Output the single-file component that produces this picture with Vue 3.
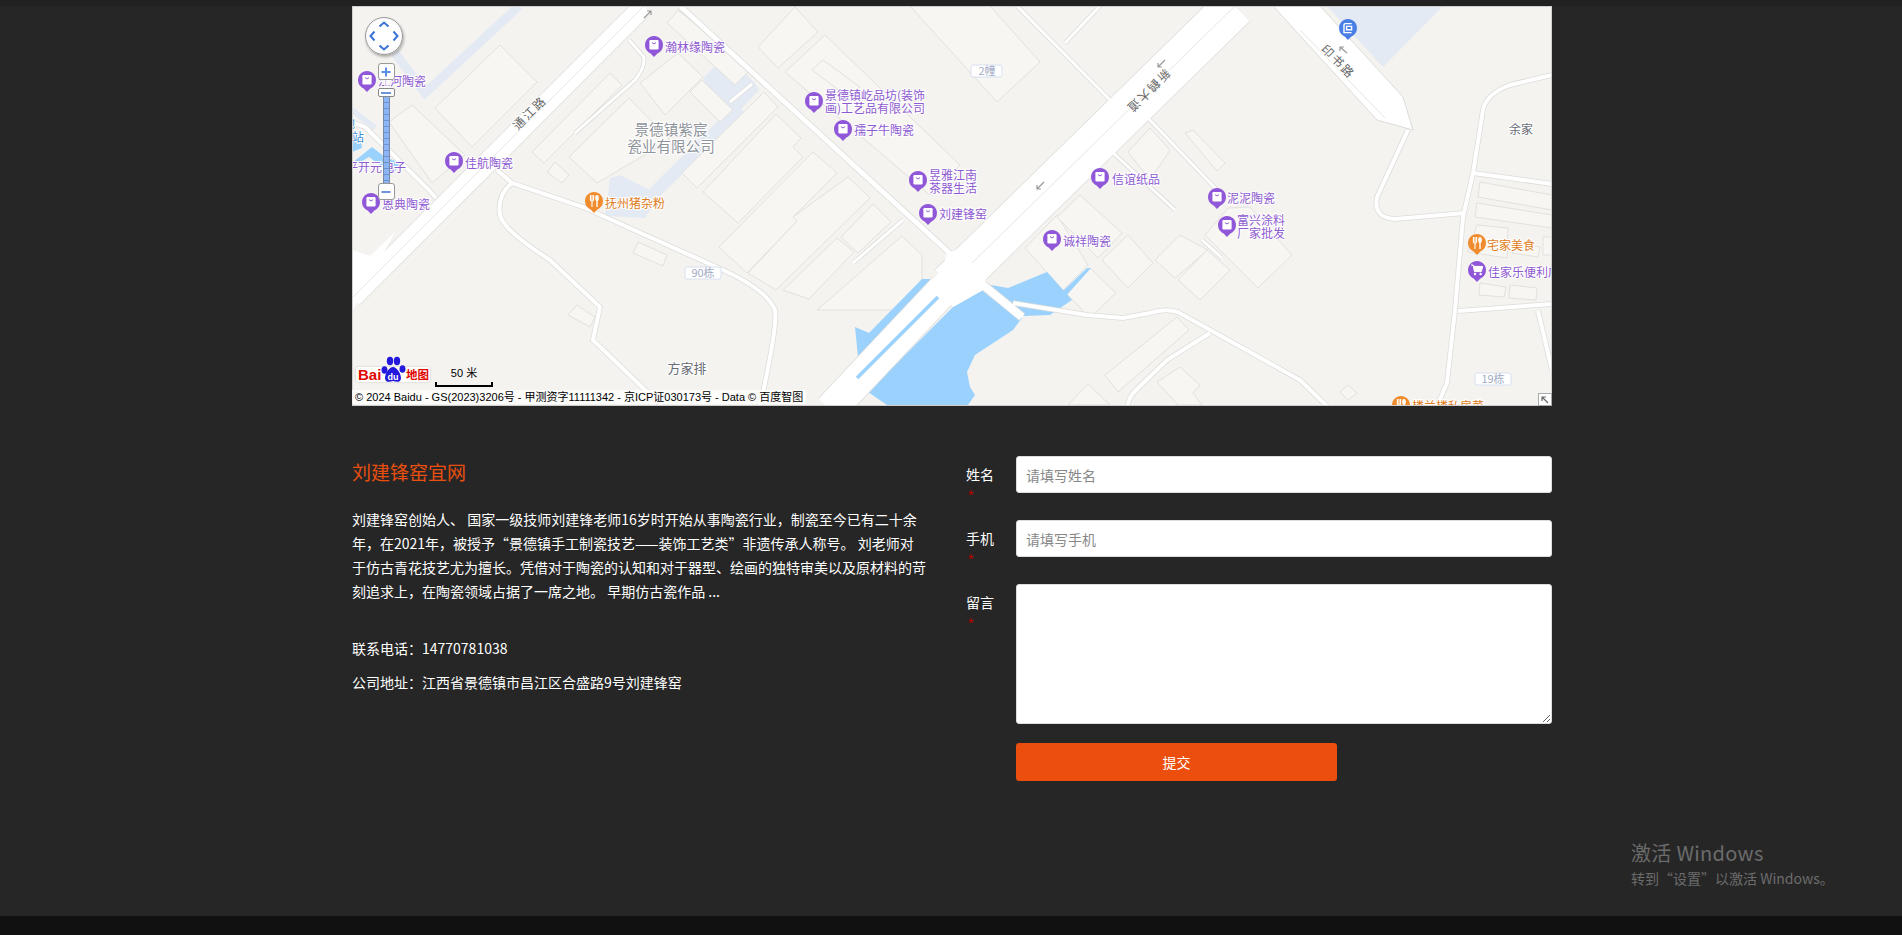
<template>
  <div class="page">
    <div class="topline"></div>
    <div class="map">
      <svg class="map-svg" viewBox="352 6 1200 400" width="1200" height="400">
        <rect x="352" y="6" width="1200" height="400" fill="#f4f3f0" />

        <!-- 淺藍色綠帶 -->
        <polygon points="1327,6 1443,6 1383,67" fill="#e4eaf3" />
        <polygon points="703,78 722,59 730,59 755,83 759,90 740,110 720,122" fill="#e4eaf3" />
        <polygon points="610,178 620,175 660,195 645,218 605,216" fill="#e4eaf3" />
        <path d="M519 6 L425 93 L395 53" stroke="#e4eaf3" stroke-width="9" fill="none" />
        <path d="M352 110 L375 128" stroke="#e4eaf3" stroke-width="6" fill="none" />
        <path d="M740 108 L640 207" stroke="#e4eaf3" stroke-width="13" fill="none" />

        <!-- 建築 -->
        <polygon v-for="(b, i) in blocks" :key="'b' + i" :points="b" class="block" />

        <!-- 水面 -->
        <polygon v-for="(w, i) in waters" :key="'w' + i" :points="w" fill="#9ad2fd" />

        <!-- 道路 -->
        <path v-for="(r, i) in roads" :key="'c' + i" :d="r.d" :stroke-width="r.w + 1.5" class="casing" />
        <polygon points="1273,6 1377,120 1413,130 1403,97 1320,6" fill="#fff" stroke="#dcdcda" />
        <polygon points="933,280 943,267 947,253 962,248 987,270 985,283 983,290 953,307" fill="#fff" />
        <polygon points="352,250 370,256 395,232 352,312" fill="#fff" />
        <path v-for="(r, i) in roads" :key="'r' + i" :d="r.d" :stroke-width="r.w" class="road" />
        <path d="M857 378 L938 297" stroke="#9ad2fd" stroke-width="3.5" fill="none" />
        <g class="median">
          <path d="M352 298 L644 6" />
          <path d="M972 263 L1235 6" />
          <path d="M1300 30 L1385 118" />
        </g>

        <!-- 路向箭頭 -->
        <g class="arrow">
          <path d="M644 18 L651 11 M647 11 H651 V15" />
          <path d="M1165 60 L1158 67 M1158 63 V67 H1162" />
          <path d="M1044 182 L1037 189 M1037 185 V189 H1041" />
          <path d="M1347 53 L1340 47 M1344 47 H1340 V51" />
        </g>

        <!-- 路名與地名 -->
        <text x="530" y="117" class="road-name" transform="rotate(-45 530 113)">通江路</text>
        <text x="1148" y="95" class="road-name" transform="rotate(135 1148 91)">新鹤大道</text>
        <text x="1338" y="66" class="road-name" transform="rotate(45 1338 62)">印书路</text>

        <text x="671" y="135" class="area">景德镇紫宸</text>
        <text x="671" y="152" class="area">瓷业有限公司</text>
        <text x="687" y="373" class="place">方家排</text>
        <text x="1521" y="134" class="place small">余家</text>
        <text x="343" y="128" class="metro">地</text>
        <text x="352" y="142" class="metro">站</text>

        <g v-for="t in tags" :key="t.text">
          <rect :x="t.x" :y="t.y" width="36" height="12" rx="2" class="tag-box" :class="{ narrow: t.narrow }" />
          <text :x="t.x + (t.narrow ? 16 : 18)" :y="t.y + 10" class="tag-text">{{ t.text }}</text>
        </g>

        <!-- 興趣點 -->
        <g v-for="p in pins" :key="p.id">
          <g :transform="`translate(${p.x} ${p.y})`">
            <path d="M0 12 L-3.4 8.4 A9 9 0 1 1 3.4 8.4 Z" :fill="colors[p.kind]" />
            <template v-if="p.kind === 'shop'">
              <rect x="-4.6" y="-5" width="9.2" height="9.4" rx="1.2" fill="#fff" />
              <path d="M-2 -2.4 Q0 0.4 2 -2.4" stroke="#8f5bd6" stroke-width="1" fill="none" />
            </template>
            <template v-else-if="p.kind === 'cart'">
              <path d="M-6 -5 H-3.8 L-2.6 1.6 H4.4 L5.6 -3.6 H-3.2" fill="#fff" stroke="#fff" stroke-width="1" />
              <circle cx="-2" cy="4" r="1.2" fill="#fff" />
              <circle cx="3.6" cy="4" r="1.2" fill="#fff" />
            </template>
            <template v-else-if="p.kind === 'food'">
              <path d="M-3.6 -6 V-1.6 Q-3.6 0 -2 0 V6 M-2 -6 V-1 M-0.4 -6 V-1.6 Q-0.4 0 -2 0" stroke="#fff" stroke-width="1.1" fill="none" />
              <path d="M3 6 V-1" stroke="#fff" stroke-width="1.4" />
              <ellipse cx="3" cy="-3" rx="1.8" ry="3" fill="#fff" />
            </template>
            <template v-else>
              <path d="M3.6 -4.4 H-2.6 Q-4 -4.4 -4 -3 V4.6 H3.6 M-1.4 -1.6 H3.6 V1.8 H-1.4 Z" stroke="#fff" stroke-width="1.4" fill="none" />
            </template>
          </g>
          <text
            v-for="(line, i) in p.lines"
            :key="line"
            :x="p.tx"
            :y="p.ty + i * 13"
            class="poi"
            :class="p.kind === 'food' ? 'food' : ''"
          >{{ line }}</text>
        </g>
        <text x="346" y="172" class="poi">平开元电子</text>
      </svg>

      <!-- 地圖控件 -->
      <div class="pan">
        <svg width="38" height="38" viewBox="0 0 38 38">
          <path d="M14.5 9.5 L19 5.5 L23.5 9.5 M14.5 28.5 L19 32.5 L23.5 28.5 M9.5 14.5 L5.5 19 L9.5 23.5 M28.5 14.5 L32.5 19 L28.5 23.5" stroke="#3b74d6" stroke-width="2" fill="none" />
        </svg>
      </div>
      <div class="zoom-bar">
        <div class="zoom-btn">
          <svg width="10" height="10" viewBox="0 0 10 10"><path d="M5 0.5 V9.5 M0.5 5 H9.5" stroke="#5a8fe8" stroke-width="2" /></svg>
        </div>
        <div class="zoom-gap"></div>
        <div class="zoom-handle"><span></span></div>
        <div class="zoom-track"></div>
        <div class="zoom-btn">
          <svg width="10" height="10" viewBox="0 0 10 10"><path d="M0.5 5 H9.5" stroke="#6d93d8" stroke-width="2" /></svg>
        </div>
      </div>

      <div class="logo">
        <span class="logo-bai">Bai</span>
        <svg class="logo-paw" width="28" height="29" viewBox="0 0 28 29">
          <ellipse cx="5.5" cy="15" rx="3" ry="3.8" fill="#2319dc" />
          <ellipse cx="11" cy="6" rx="3.2" ry="4.2" fill="#2319dc" />
          <ellipse cx="18" cy="6" rx="3.2" ry="4.2" fill="#2319dc" />
          <ellipse cx="23.5" cy="14" rx="3" ry="3.8" fill="#2319dc" />
          <path d="M14 12 C18 12 22 19 22 23 C22 28 17 27 14 26 C11 27 6 28 6 23 C6 19 10 12 14 12 Z" fill="#2319dc" />
          <text x="14" y="24.5" class="logo-du">du</text>
        </svg>
        <span class="logo-map">地图</span>
      </div>
      <div class="scale">
        <span>50 米</span>
        <i></i>
      </div>
      <div class="copy">© 2024 Baidu - GS(2023)3206号 - 甲测资字11111342 - 京ICP证030173号 - Data © 百度智图</div>
      <div class="corner">
        <svg width="10" height="10" viewBox="0 0 10 10"><path d="M8 8 L2.5 2.5 M2 6 V2 H6" stroke="#666" stroke-width="1.2" fill="none" /></svg>
      </div>
    </div>

    <div class="info">
      <div class="about">
        <h2>刘建锋窑宜网</h2>
        <p class="desc">
          刘建锋窑创始人、 国家一级技师刘建锋老师16岁时开始从事陶瓷行业，制瓷至今已有二十余<br />
          年，在2021年，被授予“景德镇手工制瓷技艺——装饰工艺类”非遗传承人称号。 刘老师对<br />
          于仿古青花技艺尤为擅长。凭借对于陶瓷的认知和对于器型、绘画的独特审美以及原材料的苛<br />
          刻追求上，在陶瓷领域占据了一席之地。 早期仿古瓷作品 ...
        </p>
        <p class="contact">联系电话：14770781038</p>
        <p class="contact">公司地址：江西省景德镇市昌江区合盛路9号刘建锋窑</p>
      </div>

      <form class="form" @submit.prevent>
        <div v-for="f in fields" :key="f.label" class="row">
          <label>{{ f.label }}<em>*</em></label>
          <textarea v-if="f.area"></textarea>
          <input v-else type="text" :placeholder="f.placeholder" />
        </div>
        <button type="submit">提交</button>
      </form>
    </div>

    <div class="footer"></div>

    <div class="activate">
      <div class="a1">激活 Windows</div>
      <div class="a2">转到“设置”以激活 Windows。</div>
    </div>
  </div>
</template>

<script setup>
const colors = { shop: '#9058d8', cart: '#9058d8', food: '#f08c2e', bus: '#4a7fe6' }

const fields = [
  { label: '姓名', placeholder: '请填写姓名' },
  { label: '手机', placeholder: '请填写手机' },
  { label: '留言', area: true }
]

const pins = [
  { id: 1, kind: 'shop', x: 654, y: 45, tx: 665, ty: 52, lines: ['瀚林缘陶瓷'] },
  { id: 2, kind: 'shop', x: 367, y: 80, tx: 378, ty: 86, lines: ['江河陶瓷'] },
  { id: 3, kind: 'shop', x: 454, y: 161, tx: 465, ty: 168, lines: ['佳航陶瓷'] },
  { id: 4, kind: 'shop', x: 371, y: 202, tx: 382, ty: 209, lines: ['恩典陶瓷'] },
  { id: 5, kind: 'food', x: 594, y: 201, tx: 605, ty: 208, lines: ['抚州猪杂粉'] },
  { id: 6, kind: 'shop', x: 814, y: 101, tx: 825, ty: 100, lines: ['景德镇屹品坊(装饰', '画)工艺品有限公司'] },
  { id: 7, kind: 'shop', x: 843, y: 129, tx: 854, ty: 135, lines: ['孺子牛陶瓷'] },
  { id: 8, kind: 'shop', x: 918, y: 180, tx: 929, ty: 180, lines: ['昱雅江南', '茶器生活'] },
  { id: 9, kind: 'shop', x: 928, y: 213, tx: 939, ty: 219, lines: ['刘建锋窑'] },
  { id: 10, kind: 'shop', x: 1100, y: 177, tx: 1112, ty: 184, lines: ['信谊纸品'] },
  { id: 11, kind: 'shop', x: 1052, y: 239, tx: 1063, ty: 246, lines: ['诚祥陶瓷'] },
  { id: 12, kind: 'shop', x: 1217, y: 197, tx: 1227, ty: 203, lines: ['泥泥陶瓷'] },
  { id: 13, kind: 'shop', x: 1227, y: 225, tx: 1237, ty: 225, lines: ['富兴涂料', '厂家批发'] },
  { id: 14, kind: 'food', x: 1477, y: 243, tx: 1487, ty: 250, lines: ['宅家美食'] },
  { id: 15, kind: 'cart', x: 1477, y: 270, tx: 1488, ty: 277, lines: ['佳家乐便利店'] },
  { id: 16, kind: 'food', x: 1401, y: 405, tx: 1412, ty: 411, lines: ['楼兰楼私房菜'] },
  { id: 17, kind: 'bus', x: 1348, y: 28, tx: 1360, ty: -20, lines: [] }
]

const tags = [
  { text: '2幢', x: 971, y: 65, narrow: true },
  { text: '90栋', x: 685, y: 267 },
  { text: '19栋', x: 1475, y: 373 }
]

const waters = [
  '953,307 983,290 1022,318 1013,330 975,355 967,372 970,387 975,395 968,405 887,405 868,392',
  '985,284 1008,288 1047,272 1072,300 1050,315 1023,316',
  '922,279 932,279 858,357 855,327 869,333',
  '1062,292 1087,268 1091,268 1066,296',
  '352,132 360,132 362,148 352,152',
  '352,163 372,147 385,157 400,163 394,173 387,170 369,157 352,167'
]

const roads = [
  { d: 'M352 298 L644 6', w: 20 },
  { d: 'M680 6 L955 258', w: 5 },
  { d: 'M830 410 L945 288', w: 32 },
  { d: 'M950 285 L1235 6', w: 42 },
  { d: 'M983 285 L1022 317', w: 8 },
  { d: 'M1408 130 L1377 197 Q1373 218 1395 219 L1465 213', w: 4 },
  { d: 'M1552 75 L1510 85 Q1486 94 1483 110 L1473 173 L1463 217 L1455 310 L1447 383 L1437 406', w: 4 },
  { d: 'M1473 173 L1552 184', w: 4 },
  { d: 'M1458 311 L1552 304', w: 4 },
  { d: 'M1538 311 L1552 370', w: 4 },
  { d: 'M1013 303 L1087 315 L1123 318 L1150 313 Q1165 308 1178 312 L1300 380 L1327 406', w: 4 },
  { d: 'M1210 333 L1167 360 L1136 390 Q1128 398 1128 406', w: 4 },
  { d: 'M1017 6 L1110 100', w: 3 },
  { d: 'M1100 6 L1065 43', w: 3 },
  { d: 'M1147 117 L1217 190', w: 3 },
  { d: 'M1110 150 L1175 210', w: 3 },
  { d: 'M497 170 L512 183 L583 207 L723 270 Q767 290 775 310 Q778 325 760 406', w: 4 },
  { d: 'M512 183 Q497 195 500 215 Q503 230 550 260 L600 307 L593 340 L643 388 L662 406', w: 4 },
  { d: 'M352 122 L365 127 L429 190 L436 198', w: 4 },
  { d: 'M629 40 L644 57 Q645 68 635 80 L575 133', w: 3 },
  { d: 'M730 102 L752 84', w: 3 },
  { d: 'M853 263 L903 220', w: 3 },
  { d: 'M1202 240 L1222 258', w: 3 }
]

const blocks = [
  '435,108 500,45 537,82 472,147',
  '389,122 412,105 465,155 432,183',
  '532,152 610,73 622,85 544,163',
  '569,157 629,98 670,140 597,183',
  '547,172 555,162 569,175 562,183',
  '640,83 678,53 703,77 665,115',
  '690,92 702,80 733,110 720,122',
  '667,23 678,10 750,70 735,85',
  '682,173 697,188 778,107 764,92',
  '703,192 738,223 803,157 793,147 801,138 776,114',
  '719,247 747,273 797,221 793,217 837,173 813,152',
  '748,273 776,290 870,198 848,177 793,217 797,221',
  '783,290 809,299 854,252 837,238',
  '841,237 873,204 891,222 858,253',
  '817,310 902,236 922,255 922,280 893,310',
  '758,47 795,7 818,32 778,68',
  '785,72 825,35 960,165 930,195',
  '812,70 823,60 860,87 848,97',
  '910,6 990,6 1040,62 997,102',
  '1025,248 1057,215 1088,265 1063,290',
  '1065,292 1090,268 1116,293 1090,318',
  '1102,260 1128,235 1153,263 1128,288',
  '1155,260 1180,235 1208,250 1175,278',
  '1178,280 1207,250 1230,270 1200,300',
  '1185,133 1193,130 1225,163 1217,171',
  '1228,208 1250,207 1292,255 1258,288 1205,235',
  '1057,217 1080,195 1122,233 1098,258',
  '1128,152 1150,128 1170,150 1150,180',
  '1105,375 1177,317 1189,330 1118,392',
  '1068,405 1088,384 1110,405',
  '1157,382 1180,367 1200,385 1193,393 1202,405 1178,405',
  '1340,392 1348,385 1357,393 1348,400',
  '1480,182 1552,195 1552,210 1478,197',
  '1477,203 1552,215 1552,228 1475,217',
  '1477,225 1508,228 1507,258 1468,252',
  '1513,243 1540,247 1538,257 1512,253',
  '1543,237 1552,237 1552,255 1543,255',
  '1480,283 1506,287 1504,297 1479,295',
  '1510,285 1537,288 1536,300 1509,298',
  '633,253 638,242 667,255 663,266',
  '568,315 577,305 595,317 590,327'
]
</script>

<style scoped>
.page {
  position: relative;
  min-height: 935px;
  padding: 0 0 0 2px;
  box-sizing: border-box;
  background: #262626;
  font-family: "Noto Sans CJK SC", "Liberation Sans", sans-serif;
  color: #eee;
  overflow: hidden;
}
.topline {
  height: 6px;
  margin-left: -2px;
  background: #212121;
}

.map {
  position: relative;
  width: 1200px;
  height: 400px;
  margin: 0 auto;
  overflow: hidden;
  outline: 1px solid #cfcfcf;
  outline-offset: -1px;
}
.map-svg {
  display: block;
}

.block {
  fill: #f7f6f3;
  stroke: #e2e1de;
  stroke-width: 1;
}
.casing {
  fill: none;
  stroke: #dcdcda;
}
.road {
  fill: none;
  stroke: #fff;
}
.median path {
  fill: none;
  stroke: #e6e6e4;
  stroke-width: 1;
}
.arrow path {
  fill: none;
  stroke: #999;
  stroke-width: 1.2;
}

.road-name,
.poi,
.area,
.place,
.metro,
.tag-text {
  font-family: "Noto Sans CJK SC", sans-serif;
}
.road-name {
  font-size: 12px;
  letter-spacing: 2px;
  text-anchor: middle;
  fill: #666;
  stroke: #fff;
  stroke-width: 2px;
  paint-order: stroke;
}
.poi {
  font-size: 12px;
  fill: #8e5ad0;
  stroke: #fff;
  stroke-width: 2px;
  paint-order: stroke;
}
.poi.food {
  fill: #e07c20;
}
.metro {
  font-size: 12px;
  fill: #3e8ed8;
  stroke: #fff;
  stroke-width: 2px;
  paint-order: stroke;
}
.area {
  font-size: 14.6px;
  text-anchor: middle;
  fill: #8f949c;
  stroke: #fff;
  stroke-width: 2px;
  paint-order: stroke;
}
.place {
  font-size: 13px;
  text-anchor: middle;
  fill: #666a73;
  stroke: #fff;
  stroke-width: 2px;
  paint-order: stroke;
}
.place.small {
  font-size: 12px;
}
.tag-box {
  fill: #fff;
  stroke: #d8e0f0;
  stroke-width: 1;
}
.tag-box.narrow {
  width: 31px;
}
.tag-text {
  font-size: 11px;
  text-anchor: middle;
  fill: #a3abc4;
}

.pan {
  position: absolute;
  left: 13px;
  top: 11px;
  width: 38px;
  height: 38px;
  border: 1px solid #999;
  border-radius: 50%;
  box-sizing: border-box;
  background: radial-gradient(circle, #fff 55%, #f0f0f0 100%);
  box-shadow: 1px 2px 3px rgba(0, 0, 0, 0.3);
}
.pan svg {
  display: block;
  margin: -1px;
}
.zoom-bar {
  position: absolute;
  left: 25px;
  top: 57px;
  width: 18px;
  display: flex;
  flex-direction: column;
  align-items: center;
}
.zoom-btn {
  width: 17px;
  height: 17px;
  box-sizing: border-box;
  border: 1px solid #999;
  border-radius: 3px;
  background: #fff;
  display: flex;
  align-items: center;
  justify-content: center;
}
.zoom-gap {
  width: 5px;
  height: 8px;
  background: rgba(255, 255, 255, 0.6);
}
.zoom-handle {
  width: 17px;
  height: 9px;
  box-sizing: border-box;
  border: 1px solid #888;
  border-radius: 2px;
  background: #fff;
  display: flex;
  align-items: center;
  justify-content: center;
}
.zoom-handle span {
  width: 10px;
  height: 2px;
  background: #6d93d8;
}
.zoom-track {
  width: 5px;
  height: 86px;
  background: repeating-linear-gradient(#8db4f5 0 5px, #6f93cf 5px 6px);
  border-left: 1px solid #7a8aa8;
  border-right: 1px solid #7a8aa8;
}

.logo {
  position: absolute;
  left: 4px;
  top: 361px;
  width: 74px;
  height: 15px;
  border-radius: 3px;
  background: rgba(255, 255, 255, 0.85);
  box-shadow: 0 0 2px #bbb;
}
.logo-bai {
  position: absolute;
  left: 2px;
  top: -2px;
  font: bold 15px/19px "Liberation Sans", sans-serif;
  color: #e10601;
}
.logo-paw {
  position: absolute;
  left: 23px;
  top: -12px;
}
.logo-du {
  font: bold 9px "Liberation Sans", sans-serif;
  fill: #fff;
  text-anchor: middle;
}
.logo-map {
  position: absolute;
  left: 50px;
  top: 0;
  font: bold 11.5px/15px "Noto Sans CJK SC", sans-serif;
  color: #e10601;
}
.scale {
  position: absolute;
  left: 83px;
  top: 361px;
  width: 58px;
  box-sizing: border-box;
  text-align: center;
  font: 11px/13px "Liberation Sans", "Noto Sans CJK SC", sans-serif;
  color: #000;
}
.scale i {
  display: block;
  height: 5px;
  margin-top: 2px;
  border: 2px solid #000;
  border-top: 0;
  box-sizing: border-box;
}
.copy {
  position: absolute;
  left: 0;
  top: 384px;
  padding: 0 3px;
  background: rgba(255, 255, 255, 0.7);
  font: 11px/14px "Liberation Sans", "Noto Sans CJK SC", sans-serif;
  color: #000;
  white-space: nowrap;
}
.corner {
  position: absolute;
  right: 0;
  bottom: 0;
  width: 14px;
  height: 13px;
  box-sizing: border-box;
  border: 1px solid #aaa;
  background: #fff;
  display: flex;
  align-items: center;
  justify-content: center;
}

.info {
  display: flex;
  width: 1200px;
  margin: 50px auto 0;
  gap: 38px;
}
.about {
  width: 576px;
  flex: none;
}
.about h2 {
  margin: 4px 0 0;
  font-size: 19px;
  line-height: 24px;
  font-weight: 400;
  color: #ea4f10;
}
.desc {
  margin: 23px 0 0;
  font-size: 14px;
  line-height: 24px;
  color: #fff;
  white-space: nowrap;
}
.contact {
  margin: 0;
  font-size: 14px;
  line-height: 34px;
  color: #fff;
}
.desc + .contact {
  margin-top: 28px;
}

.form {
  flex: 1;
}
.row {
  display: flex;
  align-items: flex-start;
  margin-bottom: 27px;
}
.row label {
  width: 50px;
  height: 37px;
  flex: none;
  box-sizing: border-box;
  padding-top: 8px;
  font-size: 14px;
  line-height: 20px;
  color: #fff;
}
.row label em {
  display: block;
  margin-top: 3px;
  padding-left: 2px;
  font: normal 15px/16px "Liberation Sans", sans-serif;
  color: #b00;
}
.row input,
.row textarea {
  flex: 1;
  min-width: 0;
  box-sizing: border-box;
  border: 1px solid #ddd;
  border-radius: 3px;
  background: #fff;
  padding: 0 9px;
  font: 14px "Noto Sans CJK SC", sans-serif;
  color: #333;
  outline: none;
}
.row input {
  height: 37px;
}
.row input::placeholder {
  color: #888;
}
.row textarea {
  height: 140px;
}
.row:last-of-type {
  margin-bottom: 19px;
}
.form button {
  display: block;
  width: 321px;
  height: 38px;
  margin-left: 50px;
  padding-bottom: 2px;
  border: 0;
  border-radius: 3px;
  background: #eb4e0d;
  color: #fff;
  font: 14px "Noto Sans CJK SC", sans-serif;
}

.footer {
  position: absolute;
  left: 0;
  right: 0;
  bottom: 0;
  height: 19px;
  background: #111;
}
.activate {
  position: absolute;
  left: 1631px;
  top: 838px;
  color: #6c6c6c;
}
.a1 {
  font-size: 20px;
  line-height: 30px;
  letter-spacing: 0.3px;
  white-space: nowrap;
}
.a2 {
  font-size: 14px;
  line-height: 20px;
  white-space: nowrap;
}
</style>

<style>
html,
body {
  margin: 0;
  background: #262626;
}
</style>
